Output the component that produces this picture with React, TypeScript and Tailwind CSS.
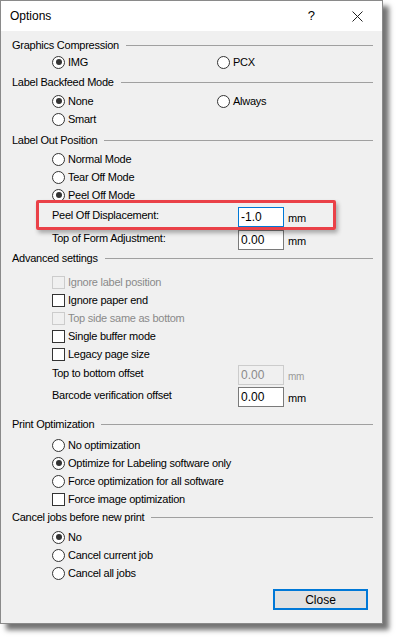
import React from 'react'

// Windows-style "Options" printer dialog

function Radio({ checked }: { checked?: boolean }) {
  return (
    <div className="w-[13px] h-[13px] rounded-full border border-[#333333] bg-white flex items-center justify-center shrink-0">
      {checked && <div className="w-[6px] h-[6px] rounded-full bg-[#333333]" />}
    </div>
  )
}

function Check({ disabled }: { disabled?: boolean }) {
  return (
    <div
      className={`w-[13px] h-[13px] border shrink-0 ${disabled ? 'border-[#cccccc] bg-[#f0f0f0]' : 'border-[#333333] bg-white'}`}
    />
  )
}

function Header({ label, className = '' }: { label: string; className?: string }) {
  return (
    <div className={`flex items-center h-4 pl-[11px] pr-[9px] ${className}`}>
      <span className="whitespace-nowrap">{label}</span>
      <div className="flex-1 ml-[7px] h-px bg-[#a0a0a0]" />
    </div>
  )
}

function RadioRow({ label, checked, className = '' }: { label: string; checked?: boolean; className?: string }) {
  return (
    <div className={`flex items-center h-[18px] pl-[51px] ${className}`}>
      <Radio checked={checked} />
      <span className="ml-[3px]">{label}</span>
    </div>
  )
}

function CheckRow({ label, disabled, className = '' }: { label: string; disabled?: boolean; className?: string }) {
  return (
    <div className={`flex items-center h-[18px] pl-[51px] ${className}`}>
      <Check disabled={disabled} />
      <span className={`ml-[3px] ${disabled ? 'text-[#8a8a8a]' : ''}`}>{label}</span>
    </div>
  )
}

function InputRow({
  label,
  value,
  focused,
  disabled,
  className = '',
}: {
  label: string
  value: string
  focused?: boolean
  disabled?: boolean
  className?: string
}) {
  const box = disabled
    ? 'border-[#cccccc] bg-[#f0f0f0] text-[#8a8a8a]'
    : focused
      ? 'border-[#0078d7] bg-white'
      : 'border-[#7a7a7a] bg-white'
  return (
    <div className={`flex items-center h-5 pl-[51px] ${className}`}>
      <span className="w-[186px] -mt-[3px]">{label}</span>
      <div className={`w-[46px] h-5 border flex items-center pl-[2px] text-[12px] tracking-normal ${box}`}>{value}</div>
      <span className={`ml-1 mt-[3px] ${disabled ? 'text-[#9a9a9a] text-[10px]' : ''}`}>mm</span>
    </div>
  )
}

export default function App() {
  return (
    <div className="w-[398px] h-[639px] bg-white font-['Liberation_Sans',Arial,sans-serif] text-[11px] tracking-[-0.25px] text-black">
      <div className="w-[383px] h-[624px] border border-[#8a8a8a] bg-[#f0f0f0] flex flex-col shadow-[6px_6px_5px_rgba(0,0,0,0.55)]">
        {/* Title bar */}
        <div className="h-[30px] bg-white flex items-center shrink-0 tracking-normal">
          <span className="ml-[9px] text-[12px]">Options</span>
          <span className="ml-auto text-[13px] mr-[37px]">?</span>
          <svg width="11" height="11" viewBox="0 0 11 11" className="mr-[19px]">
            <path d="M0.5 0.5L10.5 10.5M10.5 0.5L0.5 10.5" stroke="#222" strokeWidth="1" />
          </svg>
        </div>

        <Header label="Graphics Compression" className="mt-[6px]" />
        <div className="flex">
          <div className="w-[216px]">
            <RadioRow label="IMG" checked />
          </div>
          <div className="flex items-center h-[18px]">
            <Radio />
            <span className="ml-[3px]">PCX</span>
          </div>
        </div>

        <Header label="Label Backfeed Mode" className="mt-[3px]" />
        <div className="flex mt-[2px]">
          <div className="w-[216px]">
            <RadioRow label="None" checked />
          </div>
          <div className="flex items-center h-[18px]">
            <Radio />
            <span className="ml-[3px]">Always</span>
          </div>
        </div>
        <RadioRow label="Smart" />

        <Header label="Label Out Position" className="mt-1" />
        <RadioRow label="Normal Mode" className="mt-[2px] h-[17px]" />
        <RadioRow label="Tear Off Mode" />
        <RadioRow label="Peel Off Mode" checked />
        <div className="relative mt-[3px]">
          <InputRow label="Peel Off Displacement:" value="-1.0" focused />
          {/* red annotation box */}
          <div className="absolute left-[35px] top-[-7px] w-[300px] h-[30px] border-[3px] border-[#ea4148] rounded-[2px] shadow-[2px_3px_4px_rgba(0,0,0,0.3)]" />
        </div>
        <InputRow label="Top of Form Adjustment:" value="0.00" className="mt-[3px]" />

        <Header label="Advanced settings" className="mt-0" />
        <CheckRow label="Ignore label position" disabled className="mt-[7px]" />
        <CheckRow label="Ignore paper end" />
        <CheckRow label="Top side same as bottom" disabled />
        <CheckRow label="Single buffer mode" />
        <CheckRow label="Legacy page size" />
        <InputRow label="Top to bottom offset" value="0.00" disabled className="mt-[2px]" />
        <InputRow label="Barcode verification offset" value="0.00" className="mt-[2px]" />

        <Header label="Print Optimization" className="mt-[9px]" />
        <RadioRow label="No optimization" className="mt-1" />
        <RadioRow label="Optimize for Labeling software only" checked />
        <RadioRow label="Force optimization for all software" />
        <CheckRow label="Force image optimization" />

        <Header label="Cancel jobs before new print" className="mt-px" />
        <RadioRow label="No" checked className="mt-[3px]" />
        <RadioRow label="Cancel current job" />
        <RadioRow label="Cancel all jobs" />

        <div className="flex justify-end mt-[7px] pr-[14px]">
          <button className="w-[95px] h-[21px] border-2 border-[#0078d7] bg-[#e1e1e1] text-[12px] tracking-normal">Close</button>
        </div>
      </div>
    </div>
  )
}
